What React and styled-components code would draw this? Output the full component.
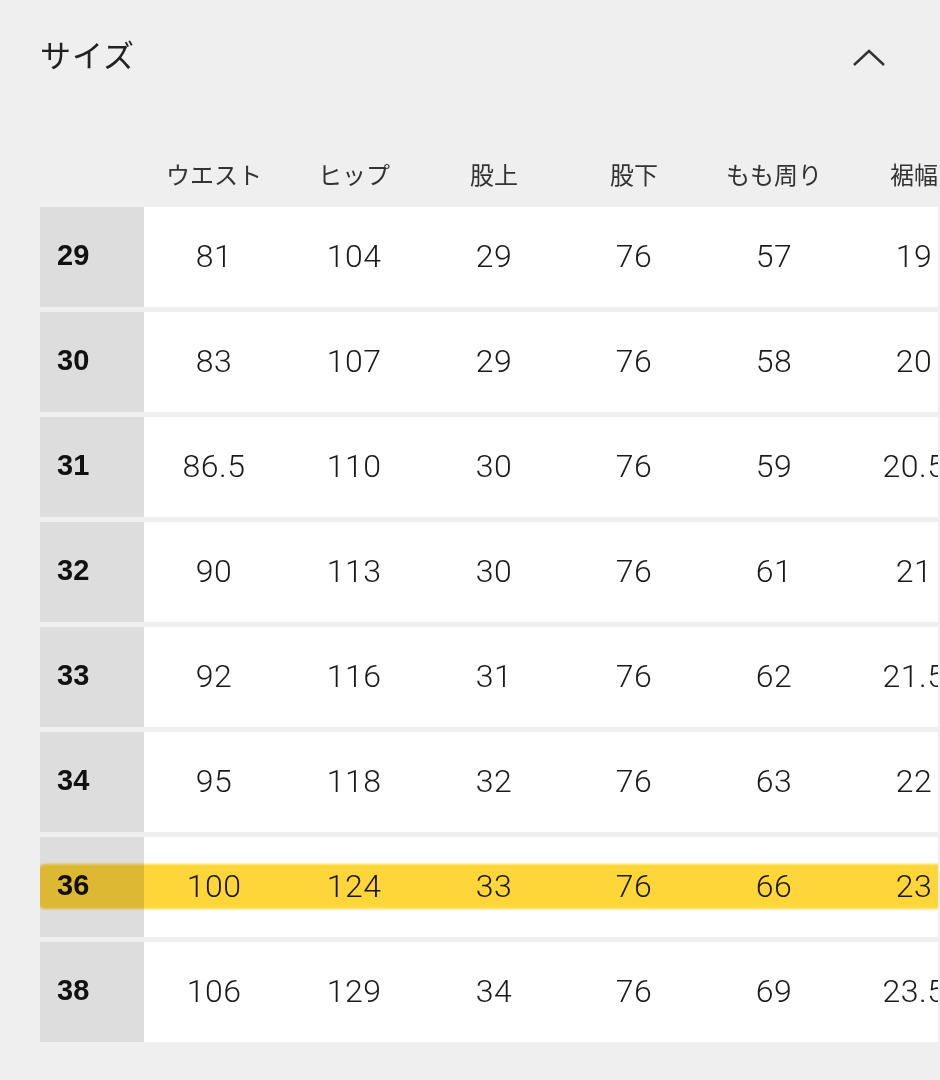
import React from "react";
import styled, { createGlobalStyle } from "styled-components";

const Global = createGlobalStyle`
  html, body { margin: 0; padding: 0; background: #efefef; }
  body { font-family: "Noto Sans CJK JP", "Noto Sans", sans-serif; color: #222; }
`;

const Page = styled.div`
  width: 940px;
  height: 1080px;
  overflow: hidden;
  background: #efefef;
  padding-left: 40px;
  box-sizing: border-box;
`;

const TopBar = styled.div`
  height: 110px;
  display: flex;
  align-items: center;
  justify-content: space-between;
  padding-right: 54px;
`;

const Title = styled.h2`
  margin: 0;
  font-size: 31px;
  font-weight: 400;
  color: #222;
  letter-spacing: 1px;
  transform: translateY(-2px);
`;

const Chevron = styled.svg`
  width: 34px;
  height: 20px;
  margin-top: 6px;
`;

const TableWrap = styled.div`
  width: 898px;
  overflow: hidden;
`;

const HeadRow = styled.div`
  display: grid;
  grid-template-columns: 104px repeat(6, 140px);
  height: 97px;
  align-items: center;
`;

const HeadCell = styled.div`
  text-align: center;
  font-size: 24px;
  color: #333;
  padding-top: 30px;
  white-space: nowrap;
`;

const Rows = styled.div`
  display: flex;
  flex-direction: column;
  gap: 5px;
`;

const Row = styled.div`
  position: relative;
  display: grid;
  grid-template-columns: 104px repeat(6, 140px);
  height: 100px;
  background: #fff;
`;

const SizeCell = styled.div`
  background: #dddddd;
  display: flex;
  align-items: center;
  padding-left: 17px;
  padding-bottom: 4px;
  font-family: "Liberation Sans", Arial, sans-serif;
  font-weight: 700;
  font-size: 29px;
  color: #111;
`;

const ValueCell = styled.div`
  display: flex;
  align-items: center;
  justify-content: center;
  padding-bottom: 3px;
  font-family: Roboto, "Liberation Sans", sans-serif;
  font-weight: 300;
  font-size: 32px;
  letter-spacing: 0.5px;
  color: #1a1a1a;
  white-space: nowrap;
`;

const Marker = styled.div`
  position: absolute;
  left: -2px;
  right: -20px;
  top: 27px;
  height: 45px;
  background: #ffd63a;
  border-radius: 7px;
  mix-blend-mode: multiply;
  filter: blur(0.8px);
  pointer-events: none;
`;

const headers = ["ウエスト", "ヒップ", "股上", "股下", "もも周り", "裾幅"];

const data = [
  ["29", "81", "104", "29", "76", "57", "19"],
  ["30", "83", "107", "29", "76", "58", "20"],
  ["31", "86.5", "110", "30", "76", "59", "20.5"],
  ["32", "90", "113", "30", "76", "61", "21"],
  ["33", "92", "116", "31", "76", "62", "21.5"],
  ["34", "95", "118", "32", "76", "63", "22"],
  ["36", "100", "124", "33", "76", "66", "23"],
  ["38", "106", "129", "34", "76", "69", "23.5"],
];

export default function App() {
  return (
    <>
      <Global />
      <Page>
        <TopBar>
          <Title>サイズ</Title>
          <Chevron viewBox="0 0 34 20">
            <polyline points="2,17 17,3 32,17" fill="none" stroke="#333" strokeWidth="2.4" />
          </Chevron>
        </TopBar>
        <TableWrap>
          <HeadRow>
            <div />
            {headers.map((h) => (
              <HeadCell key={h}>{h}</HeadCell>
            ))}
          </HeadRow>
          <Rows>
            {data.map(([size, ...vals]) => (
              <Row key={size}>
                <SizeCell>{size}</SizeCell>
                {vals.map((v, i) => (
                  <ValueCell key={i}>{v}</ValueCell>
                ))}
                {size === "36" && <Marker />}
              </Row>
            ))}
          </Rows>
        </TableWrap>
      </Page>
    </>
  );
}
